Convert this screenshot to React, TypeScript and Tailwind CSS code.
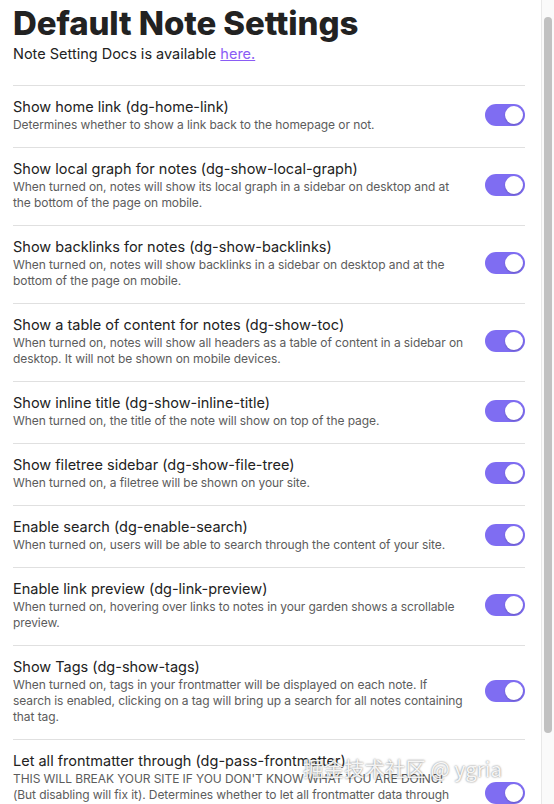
import React from "react";

const settings = [
  {
    name: "Show home link (dg-home-link)",
    desc: "Determines whether to show a link back to the homepage or not.",
  },
  {
    name: "Show local graph for notes (dg-show-local-graph)",
    desc: "When turned on, notes will show its local graph in a sidebar on desktop and at the bottom of the page on mobile.",
  },
  {
    name: "Show backlinks for notes (dg-show-backlinks)",
    desc: "When turned on, notes will show backlinks in a sidebar on desktop and at the bottom of the page on mobile.",
  },
  {
    name: "Show a table of content for notes (dg-show-toc)",
    desc: "When turned on, notes will show all headers as a table of content in a sidebar on desktop. It will not be shown on mobile devices.",
  },
  {
    name: "Show inline title (dg-show-inline-title)",
    desc: "When turned on, the title of the note will show on top of the page.",
  },
  {
    name: "Show filetree sidebar (dg-show-file-tree)",
    desc: "When turned on, a filetree will be shown on your site.",
  },
  {
    name: "Enable search (dg-enable-search)",
    desc: "When turned on, users will be able to search through the content of your site.",
  },
  {
    name: "Enable link preview (dg-link-preview)",
    desc: "When turned on, hovering over links to notes in your garden shows a scrollable preview.",
  },
  {
    name: "Show Tags (dg-show-tags)",
    desc: "When turned on, tags in your frontmatter will be displayed on each note. If\nsearch is enabled, clicking on a tag will bring up a search for all notes containing that tag.",
  },
  {
    name: "Let all frontmatter through (dg-pass-frontmatter)",
    desc: "THIS WILL BREAK YOUR SITE IF YOU DON'T KNOW WHAT YOU ARE DOING!\n(But disabling will fix it). Determines whether to let all frontmatter data through\nto the site template. Be aware that this could break your site if you have data in a format not recognized by the template.",
  },
];

const Toggle = () => (
  <div className="flex h-[22px] w-[40px] shrink-0 items-center justify-end rounded-full bg-[#7f6df2] px-[2px]">
    <div className="h-[18px] w-[18px] rounded-full bg-white shadow-[0_1px_2px_rgba(0,0,0,0.2)]" />
  </div>
);

export default function App() {
  return (
    <div className="relative flex h-[804px] w-[554px] overflow-hidden bg-white font-['Inter',sans-serif] text-[#222222]">
      {/* Modal content */}
      <div className="flex-1 pl-[13px] pr-[16px]">
        <h1 className="mt-[3px] text-[33px] font-extrabold leading-[40px] tracking-[-0.1px]">
          Default Note Settings
        </h1>
        <p className="mt-[1px] text-[14.5px] leading-[20px]">
          Note Setting Docs is available{" "}
          <a className="text-[#8a5cf5] underline" href="#">
            here.
          </a>
        </p>

        <div className="mt-[21px]">
          {settings.map((s, i) => (
            <div
              key={i}
              className="flex items-center border-t border-[#e0e0e0] pt-[11px] pb-[14px]"
            >
              <div className="mr-[16px] flex-1">
                <div className="text-[14.5px] leading-[19px]">{s.name}</div>
                <div className="mt-[1px] whitespace-pre-line text-[12px] leading-[16px] tracking-[-0.08px] text-[#5c5c5c]">
                  {s.desc}
                </div>
              </div>
              <Toggle />
            </div>
          ))}
        </div>
      </div>

      {/* Scrollbar */}
      <div className="w-[13px] shrink-0 border-l border-[#e8e8e8] bg-[#fafafa] pt-[17px]">
        <div className="mx-auto h-[716px] w-[8px] rounded-full bg-[#c1c1c1]" />
      </div>

      {/* Watermark */}
      <div className="pointer-events-none absolute left-[303px] top-[754px] font-['Noto_Sans_CJK_SC',sans-serif] text-[20.5px] leading-[28px] text-white/90 [text-shadow:0_0_2px_rgba(0,0,0,0.6)]">
        掘金技术社区 @ ygria
      </div>
    </div>
  );
}
